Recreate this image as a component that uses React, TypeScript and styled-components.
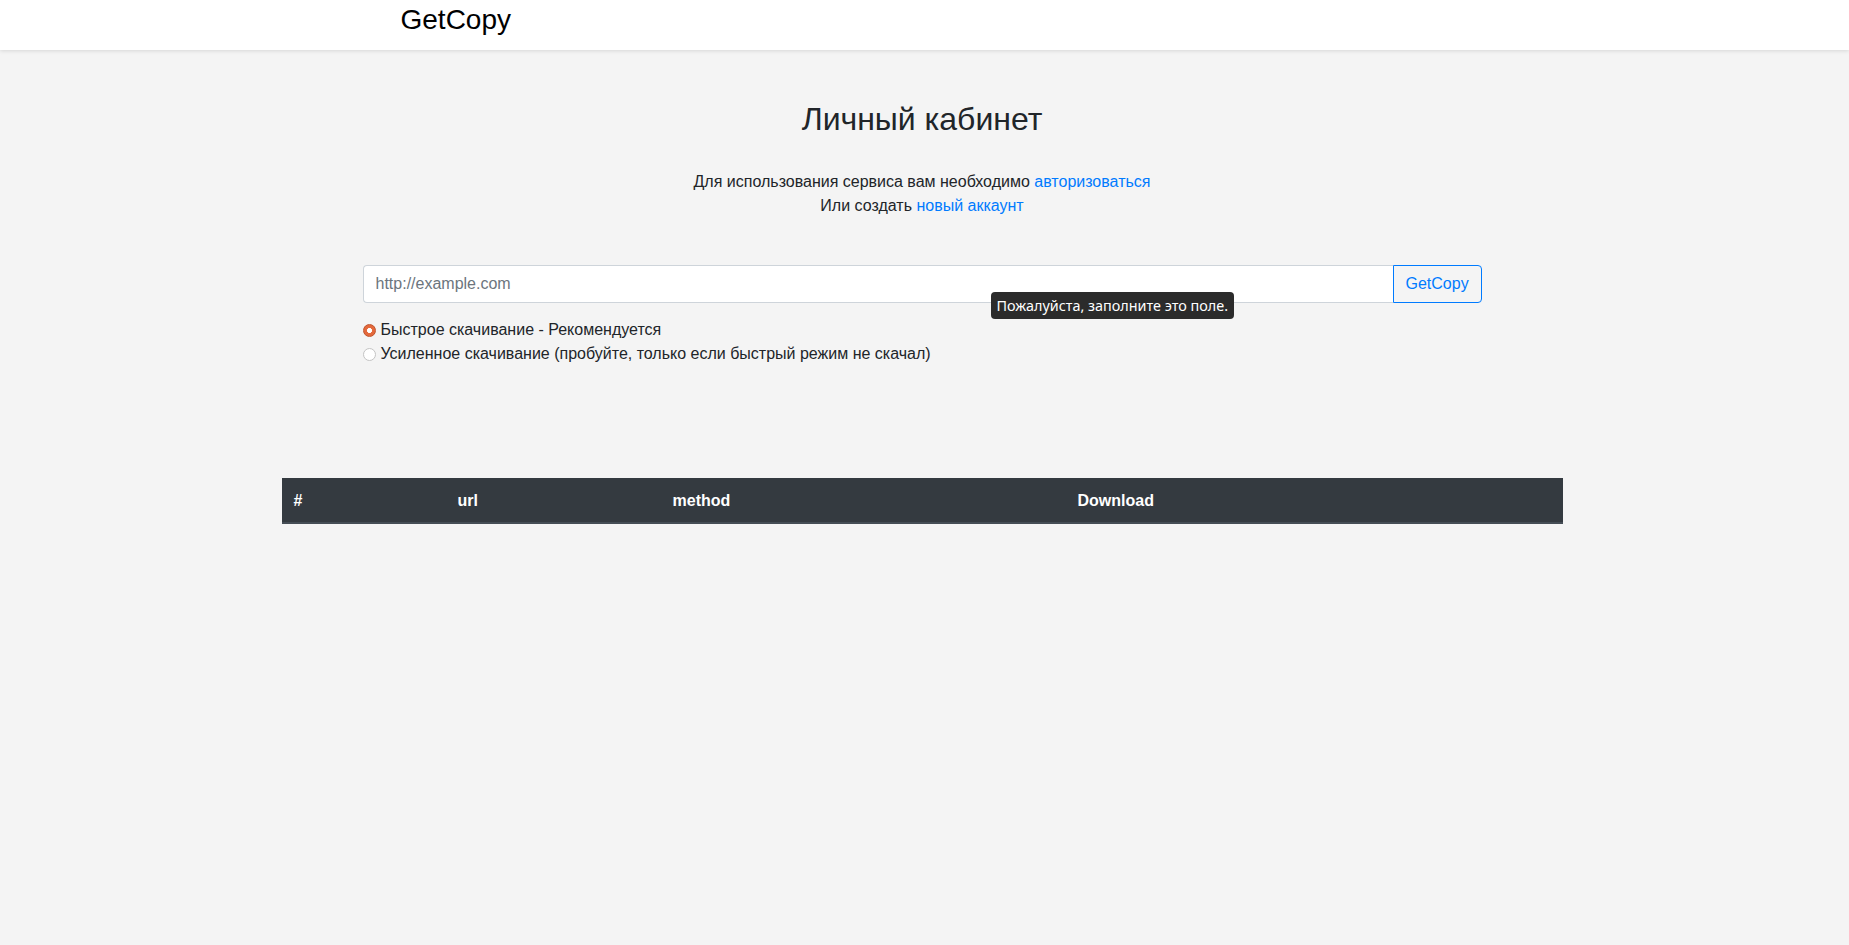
import React from "react";
import styled, { createGlobalStyle } from "styled-components";

const GlobalStyle = createGlobalStyle`
  html, body {
    margin: 0;
    padding: 0;
    background: #f4f4f4;
    font-family: "Liberation Sans", Arial, sans-serif;
    color: #212529;
  }
  * { box-sizing: border-box; }
`;

const Header = styled.header`
  height: 50px;
  background: #ffffff;
  box-shadow: 0 1px 4px rgba(0, 0, 0, 0.12);
  position: relative;
  z-index: 1;
`;

const HeaderInner = styled.div`
  width: 1118px;
  margin: 0 auto;
  padding-left: 37px;
  transform: translateX(-2px);
`;

const Brand = styled.a`
  display: inline-block;
  padding-top: 3px;
  font-size: 28px;
  line-height: 1.2;
  color: #000;
  text-decoration: none;
`;

const Main = styled.main`
  display: flex;
  flex-direction: column;
  align-items: center;
  padding-right: 5px;
`;

const Title = styled.h1`
  margin: 50px 0 0;
  font-size: 32px;
  font-weight: 400;
  line-height: 1.2;
  color: #212529;
`;

const Intro = styled.p`
  margin: 32px 0 0;
  font-size: 16px;
  line-height: 24px;
  text-align: center;
`;

const Link = styled.a`
  color: #007bff;
  text-decoration: none;
`;

const Form = styled.form`
  width: 1119px;
  margin-top: 47px;
  display: flex;
  flex-direction: column;
`;

const InputGroup = styled.div`
  position: relative;
  display: flex;
  height: 38px;
`;

const UrlInput = styled.input`
  flex: 1;
  min-width: 0;
  height: 38px;
  padding: 6px 12px;
  font-family: "Liberation Sans", Arial, sans-serif;
  font-size: 16px;
  color: #495057;
  background: #fff;
  border: 1px solid #ced4da;
  border-right: none;
  border-radius: 4px 0 0 4px;
  outline: none;
  &::placeholder {
    color: #6c757d;
  }
`;

const SubmitButton = styled.button`
  width: 89px;
  height: 38px;
  padding: 0 12px;
  font-family: "Liberation Sans", Arial, sans-serif;
  font-size: 16px;
  color: #007bff;
  background: transparent;
  border: 1px solid #007bff;
  border-radius: 0 4px 4px 0;
  cursor: pointer;
`;

const Bubble = styled.div`
  position: absolute;
  left: 628px;
  top: 27px;
  height: 27px;
  padding: 0 6px;
  display: flex;
  align-items: center;
  background: #2b2b2b;
  border-radius: 4px;
  color: #ffffff;
  font-family: "Noto Sans", "DejaVu Sans", sans-serif;
  font-size: 14.4px;
  white-space: nowrap;
`;

const Options = styled.div`
  margin-top: 15px;
  display: flex;
  flex-direction: column;
`;

const OptionLabel = styled.label`
  display: flex;
  align-items: center;
  height: 24px;
  font-size: 16px;
  line-height: 24px;
  color: #212529;
`;

const Radio = styled.input`
  appearance: none;
  width: 13px;
  height: 13px;
  margin: 0 5px 0 0;
  border-radius: 50%;
  border: 1px solid #c4c4c4;
  background: #ffffff;
  flex: none;
  &:checked {
    border-color: #c0532c;
    background: radial-gradient(circle, #ffffff 0 2.2px, #e4693c 2.8px);
  }
`;

const Table = styled.table`
  margin-top: 112px;
  width: 1281px;
  border-collapse: collapse;
`;

const HeadCell = styled.th<{ $w: number }>`
  width: ${(p) => p.$w}px;
  padding: 11px 12px 10px;
  line-height: 23px;
  font-size: 16px;
  font-weight: 700;
  text-align: left;
  color: #ffffff;
  background: #343a40;
  border-bottom: 2px solid #454d55;
`;

export default function App() {
  return (
    <>
      <GlobalStyle />
      <Header>
        <HeaderInner>
          <Brand href="#">GetCopy</Brand>
        </HeaderInner>
      </Header>
      <Main>
        <Title>Личный кабинет</Title>
        <Intro>
          Для использования сервиса вам необходимо <Link href="#">авторизоваться</Link>
          <br />
          Или создать <Link href="#">новый аккаунт</Link>
        </Intro>
        <Form onSubmit={(e) => e.preventDefault()}>
          <InputGroup>
            <UrlInput type="text" placeholder="http://example.com" />
            <SubmitButton type="submit">GetCopy</SubmitButton>
            <Bubble>Пожалуйста, заполните это поле.</Bubble>
          </InputGroup>
          <Options>
            <OptionLabel>
              <Radio type="radio" name="method" defaultChecked />
              Быстрое скачивание - Рекомендуется
            </OptionLabel>
            <OptionLabel>
              <Radio type="radio" name="method" />
              Усиленное скачивание (пробуйте, только если быстрый режим не скачал)
            </OptionLabel>
          </Options>
        </Form>
        <Table>
          <thead>
            <tr>
              <HeadCell $w={164}>#</HeadCell>
              <HeadCell $w={215}>url</HeadCell>
              <HeadCell $w={405}>method</HeadCell>
              <HeadCell $w={497}>Download</HeadCell>
            </tr>
          </thead>
        </Table>
      </Main>
    </>
  );
}
